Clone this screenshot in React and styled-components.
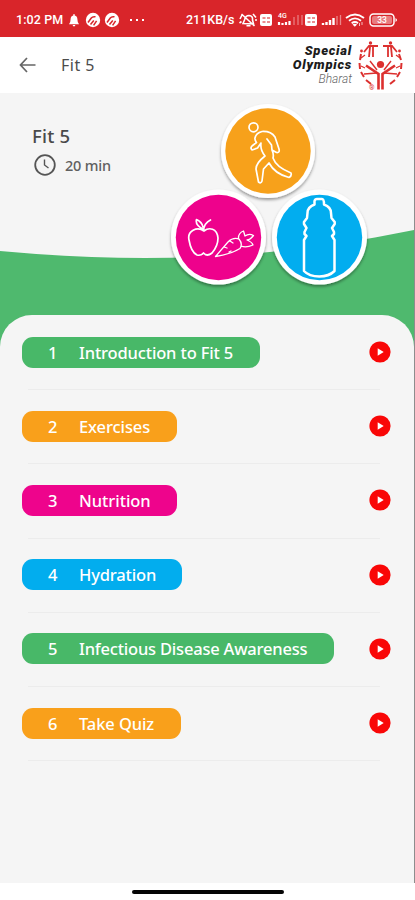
import React from 'react'
import styled, { createGlobalStyle } from 'styled-components'

const GlobalStyle = createGlobalStyle`
  * {
    box-sizing: border-box;
  }

  body {
    margin: 0;
    background: #fff;
    font-family: 'Noto Sans', 'Open Sans', sans-serif;
  }
`

const lessons = [
  { id: 1, title: 'Introduction to Fit 5', color: '#48b868', width: 238.5, spacing: -0.15 },
  { id: 2, title: 'Exercises', color: '#f9a01b', width: 155, spacing: -0.1 },
  { id: 3, title: 'Nutrition', color: '#ee048c', width: 155, spacing: -0.05 },
  { id: 4, title: 'Hydration', color: '#02adee', width: 160.5, spacing: -0.15 },
  { id: 5, title: 'Infectious Disease Awareness', color: '#48b868', width: 312.5, spacing: -0.2 },
  { id: 6, title: 'Take Quiz', color: '#f9a01b', width: 159, spacing: -0.1 },
]

const Screen = styled.div`
  width: 415px;
  height: 900px;
  display: flex;
  flex-direction: column;
  overflow: hidden;
  background: #fff;
`

const StatusBar = styled.header`
  height: 37px;
  flex-shrink: 0;
  padding: 2px 17px 0 16px;
  display: flex;
  align-items: center;
  justify-content: space-between;
  background: #d9252a;
  color: #fff;
  font-family: Roboto, sans-serif;
  font-size: 12.5px;
  font-weight: 500;
`

const StatusGroup = styled.div`
  display: flex;
  align-items: center;
  white-space: nowrap;

  svg {
    display: block;
    flex-shrink: 0;
  }
`

const Clock = styled.span`
  width: 49px;
  letter-spacing: 0.1px;
`

const NetSpeed = styled.span`
  width: 51px;
`

const BadgePair = styled.div`
  display: flex;
  gap: 3px;
  margin-left: 2px;
`

const AppBar = styled.nav`
  height: 56px;
  flex-shrink: 0;
  display: flex;
  align-items: center;
  padding: 0 12px 0 19px;
`

const BarTitle = styled.h1`
  flex: 1;
  margin: 0 0 0 25px;
  font-size: 16px;
  font-weight: 400;
  letter-spacing: 0.5px;
  color: #4c4c4c;
`

const Brand = styled.div`
  display: flex;
  align-items: center;
  gap: 5px;
`

const BrandName = styled.div`
  display: flex;
  flex-direction: column;
  align-items: flex-end;
  font-family: Roboto, sans-serif;
  font-style: italic;
  color: #1c1c1c;
`

const BrandLine = styled.span`
  font-size: 13px;
  line-height: 14px;
  font-weight: 900;
  letter-spacing: 0.75px;
`

const BrandRegion = styled.span`
  font-size: 12px;
  line-height: 15px;
  font-weight: 300;
  color: #666;
`

const Body = styled.main`
  height: 790px;
  flex-shrink: 0;
  background: #f5f5f5;
  border-right: 1px solid #8d8d8d;
`

const Hero = styled.section`
  position: relative;
  height: 222px;
  padding: 30px 0 0 32px;
`

const HeroArt = styled.svg`
  position: absolute;
  top: 0;
  left: 0;
`

const HeroText = styled.div`
  position: relative;
  color: #4a4a4a;
`

const HeroTitle = styled.h2`
  margin: 0;
  font-size: 18.5px;
  line-height: 25px;
  font-weight: 500;
  letter-spacing: 0.2px;
`

const Duration = styled.div`
  display: flex;
  align-items: center;
  gap: 8px;
  height: 23px;
  margin: 5px 0 0 1px;
  font-size: 14.5px;
  font-weight: 500;
  letter-spacing: -0.2px;
  color: #606060;
`

const ListBackdrop = styled.div`
  background: linear-gradient(#4fb96e 0 40px, #f5f5f5 40px);
`

const LessonList = styled.ul`
  margin: 0;
  padding: 0;
  list-style: none;
  background: #f5f5f5;
  border-radius: 32px 32px 0 0;
`

const LessonRow = styled.li`
  height: 74.2px;
  padding: 0 23px 0 21.5px;
  display: flex;
  align-items: center;
  justify-content: space-between;
`

const Pill = styled.div`
  width: ${({ $width }) => $width}px;
  height: 31px;
  padding-left: 26.5px;
  display: flex;
  align-items: center;
  border-radius: 11px;
  background: ${({ $color }) => $color};
  color: #fff;
  font-size: 16.5px;
  font-weight: 500;
  white-space: nowrap;
`

const LessonNumber = styled.span`
  width: 31px;
`

const LessonTitle = styled.span`
  letter-spacing: ${({ $spacing }) => $spacing}px;
`

const Divider = styled.div`
  height: 1px;
  margin: 0 34px -1px 28px;
  background: #ececec;
`

const NavigationBar = styled.footer`
  flex: 1;
  padding: 7px 0 0 132px;
`

const HomeHandle = styled.div`
  width: 152px;
  height: 4px;
  border-radius: 2px;
  background: #050505;
`

const StripedBadge = () => (
  <svg width="16" height="16" viewBox="0 0 16 16">
    <circle cx="8" cy="8" r="7.2" fill="#fff" />
    <path d="M3 10.5 6.3 6Q7.6 4.2 10.5 4.8M5.5 12.5 8.8 8.5M8.6 13.4l3-4.6" fill="none" stroke="#d9252a" strokeWidth="1.5" />
  </svg>
)

const SimBadge = () => (
  <svg width="14" height="14" viewBox="0 0 14 14">
    <rect x="1" y="1" width="12" height="12" rx="2" fill="#fff" />
    <path d="M3.5 5h3M8 5h3M3.5 9h3M8 9h3" stroke="#d9252a" strokeWidth="1.6" strokeOpacity=".7" />
  </svg>
)

const StatusIconsLeft = () => (
  <>
    <svg width="18" height="16" viewBox="0 0 18 16">
      <path d="M4 12.3q1.6-1.6 1.6-5Q5.6 3.8 9 3.3q3.4.5 3.4 4 0 3.4 1.6 5zM7.6 13h2.8q-.2 1.4-1.4 1.4T7.6 13M8.2 2.3h1.6v2H8.2z" fill="#fff" />
    </svg>
    <BadgePair>
      <StripedBadge />
      <StripedBadge />
    </BadgePair>
    <svg width="30" height="16" viewBox="0 0 30 16">
      <path d="M10 8h2M16 8h2M22 8h2" stroke="#fff" strokeWidth="2" />
    </svg>
  </>
)

const StatusIconsRight = () => (
  <>
    <svg width="22" height="18" viewBox="0 0 22 18">
      <path d="M6 12.5 7.5 9q1-4.5 4.5-4.5 4 .2 3.5 4.5l1 4zM9.5 14.8h4M3 8l2-4M2.5 12l2-1.5M4.5 3l13 12M16 3l3 3.5M18 9h2" fill="none" stroke="#fff" strokeWidth="1.6" />
    </svg>
    <SimBadge />
    <svg width="31" height="18" viewBox="0 0 31 18">
      <text x="5" y="7" fontSize="7" fill="#fff">4G</text>
      <path d="M6 14v-3M9.5 14v-2M13 14v-3M16.5 14v-4" stroke="#fff" strokeWidth="2.2" />
      <path d="M21 14V6M25 14V4M29 14V4" stroke="#fff" strokeOpacity=".4" strokeWidth="1.3" />
    </svg>
    <SimBadge />
    <svg width="25" height="18" viewBox="0 0 25 18">
      <path d="M5 14v-2M8.5 14v-3M12 14V9M15.5 14V7" stroke="#fff" strokeWidth="2.4" />
      <path d="M19 14V5M22.5 14V4" stroke="#fff" strokeOpacity=".45" strokeWidth="1.3" />
    </svg>
    <svg width="24" height="18" viewBox="0 0 24 18">
      <path d="M3 7q9-7 18 0M6 9.8q6-4.8 12 0M8.7 12.2q3.3-2.5 6.3 0" fill="none" stroke="#fff" strokeWidth="1.8" />
      <path d="m9.5 13.5 2.3 2.3 2.3-2.3q-2.3-1.5-4.6 0" fill="#fff" />
      <path d="M16.5 12v3M19 11v3" stroke="#fff" strokeOpacity=".7" />
    </svg>
    <svg width="31" height="16" viewBox="0 0 31 16">
      <rect x="3" y="2" width="24" height="12" rx="3.5" fill="none" stroke="#fff" strokeWidth="1.5" />
      <rect x="5" y="4" width="20" height="8" rx="2" fill="#fff" fillOpacity=".4" />
      <path d="M28.5 6q3 2 0 4z" fill="#fff" />
      <text x="15" y="11" fontSize="8.5" textAnchor="middle" fill="#fff">33</text>
    </svg>
  </>
)

const BrandMark = () => (
  <svg width="46" height="52" viewBox="0 0 46 52" fill="none" stroke="#dc302f">
    <circle cx="23.5" cy="25.5" r="3.6" fill="#dc302f" stroke="none" />
    <path d="M9 26.5 21.5 35v15.5M38 26.5 25.5 35v15.5" strokeWidth="2.6" />
    <path d="M7 35l13-1M40 35l-13-1M13 22l7 9M34 22l-7 9" strokeWidth="1.4" />
    <path d="M4 15l-1 6M2.5 24l.5 6M4 33l3 5M9 41l5 4M42 15l2 6M44.5 24l-.5 6M43 33l-3 5M38 41l-5 4" strokeWidth="2" />
    <path d="m7 13 5-6 9 0M13 8l-1 10M16 8v10M40 13l-5-6-9 0M34 8l1 10M31 8v10" strokeWidth="1.8" />
    <path d="M4 19l4-3M43 19l-4-3M4 27l4 2M43 27l-4 2" strokeWidth="1.2" />
    <g fill="#dc302f" stroke="none">
      <circle cx="13.5" cy="4" r="1.7" />
      <circle cx="33.5" cy="4" r="1.7" />
      <circle cx="4.5" cy="12" r="1.4" />
      <circle cx="42.5" cy="12" r="1.4" />
    </g>
    <text x="12" y="50.5" fontSize="7" fontFamily="Roboto, sans-serif" fill="#dc302f" stroke="none">®</text>
  </svg>
)

const HeroIllustration = () => (
  <HeroArt width="414" height="222" viewBox="0 93 414 222">
    <defs>
      <filter id="badgeShadow" x="-20%" y="-20%" width="140%" height="150%">
        <feDropShadow dx="0" dy="2" stdDeviation="1.8" floodOpacity=".38" />
      </filter>
    </defs>
    <path d="M0 251Q75 258 145 258C245 258 330 247 414 230V315H0z" fill="#4fb96e" />
    <g filter="url(#badgeShadow)" fill="#fff">
      <circle cx="268" cy="151" r="47" />
      <circle cx="218.5" cy="237" r="47.5" />
      <circle cx="319.5" cy="237" r="47.5" />
    </g>
    <circle cx="268" cy="151" r="42.7" fill="#f7a11b" />
    <circle cx="218.5" cy="237.5" r="42.7" fill="#ee028c" />
    <circle cx="319.5" cy="237.5" r="42.7" fill="#02adef" />
    <g fill="none" stroke="#fff" strokeWidth="1.7" strokeLinecap="round" strokeLinejoin="round">
      <circle cx="253.5" cy="127.3" r="4.5" />
      <path d="M255 138Q256 133 262 131.5Q271 131 275 137L279 149Q280 153 276.5 152.5L272 150L271.5 145L267 139M272 150Q274 154 273 158Q276 167 291 173Q292 176 289 177.5Q275 174 269 163L263.5 169L262 181Q261 184 258.5 182L256 169Q256 163 265 156Q260 150 261 143L257.5 148L252 150Q250 148 252 146L256.5 142.5Q254.5 140 255 138" />
      <path d="M204 231C197 226 187 231 189 240Q191 252 197 255Q201 256 203.5 253Q207 257 212 253Q218 246 218 238C217 228 209 227 204 231zM203.5 231Q204 223 210.5 220M203 229Q195 225 196.5 219.5Q202 222 203 227" />
      <path d="M239 239Q233 237 228 242L215.5 256.5Q231 254 240 248.5Q243 244 239 239M238.5 239Q238 233 243.5 231L245 236Q249 233 253.5 235.5Q250 240 247 240Q252 242 253 245Q246 248 241 246M224 247l3 1M230 241l3 2M229 252l2-1" strokeWidth="1.3" />
    </g>
    <path
      d="M314.5 204.5V201Q315 199 317 199H322Q324 199 324 204.5Q331 207 331 213L331.5 218L334.7 222V224L332 228L334 232V234L332 236L334.5 240V271Q329 276.5 319.3 276.5Q309 276.5 304 271V240L306.5 236L304.5 234V232L306.5 228L304 224V222L307 218L307.5 213Q307.5 207 314.5 204.5z"
      fill="none"
      stroke="#fff"
      strokeWidth="2.5"
      strokeLinejoin="round"
    />
  </HeroArt>
)

const PlayIcon = () => (
  <svg width="22" height="22" viewBox="0 0 22 22">
    <circle cx="11" cy="11" r="10.6" fill="#f90707" />
    <path d="M8.7 7.2v7.6l6-3.8z" fill="#fff" />
  </svg>
)

const App = () => {
  return (
    <Screen>
      <GlobalStyle />
      <StatusBar>
        <StatusGroup>
          <Clock>1:02 PM</Clock>
          <StatusIconsLeft />
        </StatusGroup>
        <StatusGroup>
          <NetSpeed>211KB/s</NetSpeed>
          <StatusIconsRight />
        </StatusGroup>
      </StatusBar>

      <AppBar>
        <svg width="17" height="16" viewBox="0 0 17 16" fill="none" stroke="#666" strokeWidth="1.7">
          <path d="M8 1 1.5 8 8 15M1.5 8h15" />
        </svg>
        <BarTitle>Fit 5</BarTitle>
        <Brand>
          <BrandName>
            <BrandLine>Special</BrandLine>
            <BrandLine>Olympics</BrandLine>
            <BrandRegion>Bharat</BrandRegion>
          </BrandName>
          <BrandMark />
        </Brand>
      </AppBar>

      <Body>
        <Hero>
          <HeroIllustration />
          <HeroText>
            <HeroTitle>Fit 5</HeroTitle>
            <Duration>
              <svg width="24" height="24" viewBox="0 0 24 24" fill="none" stroke="#555" strokeWidth="1.8">
                <circle cx="12" cy="12" r="9.8" />
                <path d="M11.5 6.5V12l4 3" strokeWidth="1.4" />
              </svg>
              20 min
            </Duration>
          </HeroText>
        </Hero>

        <ListBackdrop>
          <LessonList>
            {lessons.map((lesson) => (
              <React.Fragment key={lesson.id}>
                <LessonRow>
                  <Pill $color={lesson.color} $width={lesson.width}>
                    <LessonNumber>{lesson.id}</LessonNumber>
                    <LessonTitle $spacing={lesson.spacing}>{lesson.title}</LessonTitle>
                  </Pill>
                  <PlayIcon />
                </LessonRow>
                <Divider />
              </React.Fragment>
            ))}
          </LessonList>
        </ListBackdrop>
      </Body>

      <NavigationBar>
        <HomeHandle />
      </NavigationBar>
    </Screen>
  )
}

export default App
